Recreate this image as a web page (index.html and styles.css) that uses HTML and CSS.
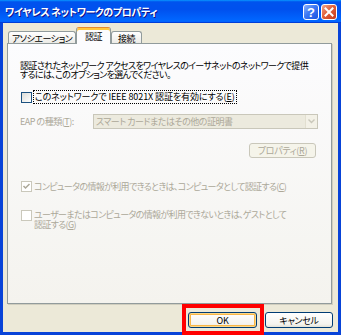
FILE: index.html
```html
<!DOCTYPE html>
<html lang="ja">
<head>
  <meta charset="UTF-8" />
  <title>ワイヤレス ネットワークのプロパティ</title>
  <link rel="stylesheet" href="styles.css">
</head>
<body>

  <div class="window">
    <div class="titlebar">
      <span class="title">ワイヤレス ネットワークのプロパティ</span>
      <div class="title-buttons">
        <span class="tb help">?</span>
        <span class="tb close">
          <svg width="10" height="10" viewBox="0 0 10 10"><path d="M1.5 1.5 L8.5 8.5 M8.5 1.5 L1.5 8.5" stroke="#fff" stroke-width="2" stroke-linecap="square"/></svg>
        </span>
      </div>
    </div>

    <div class="client">
      <div class="tabs">
        <div class="tab tab-assoc">アソシエーション</div>
        <div class="tab tab-auth active">認証</div>
        <div class="tab tab-conn">接続</div>
      </div>

      <div class="panel">
        <p class="intro">認証されたネットワーク アクセスをワイヤレスのイーサネットのネットワークで提供<br>するには、このオプションを選んでください。</p>

        <div class="check check-8021x">
          <span class="box"></span>
          <span class="focus">このネットワークで IEEE 8021X 認証を有効にする(<u>E</u>)</span>
        </div>

        <div class="eap-row">
          <span class="eap-label">EAP の種類(<u>T</u>):</span>
          <div class="combo">
            <span class="combo-text">スマート カードまたはその他の証明書</span>
            <span class="combo-arrow">
              <svg width="7" height="5" viewBox="0 0 7 5"><path d="M0.5 0.5 L3.5 3.5 L6.5 0.5" fill="none" stroke="#c9c7ba" stroke-width="1.4"/></svg>
            </span>
          </div>
        </div>

        <div class="prop-row">
          <span class="btn btn-disabled btn-prop">プロパティ(<u>R</u>)</span>
        </div>

        <div class="check check-computer disabled">
          <span class="box">
            <svg width="9" height="9" viewBox="0 0 9 9"><path d="M1.5 4 L3.5 6 L7.5 2" fill="none" stroke="#aca899" stroke-width="1.5"/></svg>
          </span>
          <span class="label">コンピュータの情報が利用できるときは、コンピュータとして認証する(<u>C</u>)</span>
        </div>

        <div class="check check-guest disabled">
          <span class="box"></span>
          <span class="label">ユーザーまたはコンピュータの情報が利用できないときは、ゲストとして<br>認証する(<u>G</u>)</span>
        </div>
      </div>

      <div class="buttons">
        <span class="btn btn-ok">OK</span>
        <span class="btn btn-cancel">キャンセル</span>
      </div>
    </div>

    <div class="highlight"></div>
  </div>

</body>
</html>
```

FILE: styles.css
```css
* {
  box-sizing: border-box;
}

html, body {
  margin: 0;
  padding: 0;
}

body {
  width: 341px;
  height: 335px;
  overflow: hidden;
  font-family: "Noto Sans CJK JP", sans-serif;
  font-feature-settings: "palt";
  font-size: 9px;
  line-height: 9px;
  letter-spacing: -0.65px;
  color: #000;
}

u {
  text-decoration: underline;
  text-underline-offset: 1px;
}

.window {
  position: relative;
  width: 341px;
  height: 335px;
  display: flex;
  flex-direction: column;
  background: #0843d8;
}

/* title bar */
.titlebar {
  height: 23px;
  display: flex;
  align-items: center;
  justify-content: space-between;
  padding: 0 4px 0 5px;
  background: linear-gradient(#0997ff 0%, #0053ee 8%, #0050ee 40%, #0066ff 88%, #0066ff 93%, #005bff 95%, #003dd7 96%, #003dd7 100%);
}

.title {
  color: #fff;
  font-weight: bold;
  font-size: 10px;
  line-height: 10px;
  letter-spacing: -0.4px;
  text-shadow: 1px 1px #0f1089;
}

.title-buttons {
  display: flex;
  gap: 2px;
  margin-top: 1px;
}

.tb {
  width: 16px;
  height: 16px;
  border: 1px solid #fff;
  border-radius: 3px;
  display: flex;
  align-items: center;
  justify-content: center;
}

.help {
  background: linear-gradient(135deg, #8db2fb 0%, #3c78f4 45%, #1a54e0 100%);
  color: #fff;
  font-family: "Liberation Sans", sans-serif;
  font-weight: bold;
  font-size: 13px;
  line-height: 13px;
  letter-spacing: 0;
}

.close {
  background: linear-gradient(135deg, #f1a78f 0%, #e2613a 45%, #c5391c 100%);
}

/* client area */
.client {
  flex: 1;
  margin: 0 3px 3px 3px;
  padding: 4px 3px 0 4px;
  background: #ece9d8;
  display: flex;
  flex-direction: column;
}

.tabs {
  height: 16px;
  display: flex;
  align-items: flex-end;
  padding-left: 1px;
  position: relative;
  z-index: 1;
  letter-spacing: -0.5px;
}

.tab {
  height: 12px;
  display: flex;
  align-items: center;
  justify-content: center;
  border: 1px solid #919b9c;
  border-bottom: none;
  border-radius: 3px 3px 0 0;
  background: linear-gradient(#fff, #ecebe6);
  padding-top: 1px;
}

.tab-assoc {
  width: 68px;
}

.tab-auth {
  width: 35px;
}

.tab-conn {
  width: 31px;
}

.tab.active {
  height: 17px;
  margin-bottom: -1px;
  background: #fcfcfe;
  border-top-color: #e68b2c;
  box-shadow: inset 0 2px #ffc83c;
  padding-top: 0;
}

.panel {
  width: 325px;
  height: 261px;
  border: 1px solid #919b9c;
  background: linear-gradient(#fcfcfe, #f4f3ee);
  box-shadow: 1px 1px 0 #d0cebf;
  padding: 0 0 0 12px;
  display: flex;
  flex-direction: column;
}

.intro {
  margin: 17px 0 0 0;
  white-space: nowrap;
}

.check {
  display: flex;
  align-items: center;
  gap: 1px;
}

.box {
  width: 11px;
  height: 11px;
  margin-left: 1px;
  flex-shrink: 0;
  border: 1px solid #1c5180;
  background: linear-gradient(135deg, #dcdcd7, #fff);
  display: flex;
  align-items: center;
  justify-content: center;
}

.check-8021x {
  margin-top: 11px;
  height: 14px;
}

.focus {
  border: 1px dotted #000;
  padding: 1px 1px 1px 1px;
  line-height: 10px;
  letter-spacing: -0.1px;
}

.disabled {
  color: #aca899;
}

.disabled .box {
  border-color: #cac8bb;
  background: #fff;
}

.eap-row {
  margin-top: 10px;
  height: 15px;
  display: flex;
  align-items: center;
  color: #aca899;
  letter-spacing: -0.5px;
}

.eap-label {
  width: 73px;
}

.combo {
  width: 225px;
  height: 15px;
  border: 1px solid #c9c7ba;
  background: #eceade;
  display: flex;
  align-items: center;
  justify-content: space-between;
  padding-left: 2px;
}

.combo-arrow {
  width: 12px;
  height: 13px;
  border-left: 1px solid #e2dfd0;
  background: #f3f1e7;
  display: flex;
  align-items: center;
  justify-content: center;
}

.prop-row {
  margin-top: 14px;
  display: flex;
  justify-content: flex-end;
  padding-right: 15px;
}

.btn {
  height: 16px;
  display: flex;
  align-items: center;
  justify-content: center;
  border: 1px solid #003c74;
  border-radius: 3px;
  background: linear-gradient(#fff, #f4f3ee 80%, #e3e1d6);
  letter-spacing: -0.3px;
}

.btn-prop {
  width: 67px;
  height: 15px;
}

.btn-disabled {
  color: #aca899;
  border-color: #c9c7ba;
  background: #f5f4ea;
}

.check-computer {
  margin-top: 22px;
  height: 12px;
}

.check-guest {
  margin-top: 18px;
  align-items: flex-start;
}

.check-guest .label {
  line-height: 10px;
  margin-top: 0;
}

.check .label {
  margin-left: 1px;
}

/* bottom buttons */
.buttons {
  margin-top: 8px;
  display: flex;
  justify-content: flex-end;
  gap: 8px;
  padding-right: 2px;
}

.btn-ok {
  width: 69px;
  box-shadow: inset 0 0 0 1px #fcd98a, inset 0 0 0 2px #f8b647;
}

.btn-cancel {
  width: 68px;
}

/* annotation frame over the OK button */
.highlight {
  position: absolute;
  left: 182px;
  top: 304px;
  width: 82px;
  height: 31px;
  border: 4px solid #f00;
}
```
